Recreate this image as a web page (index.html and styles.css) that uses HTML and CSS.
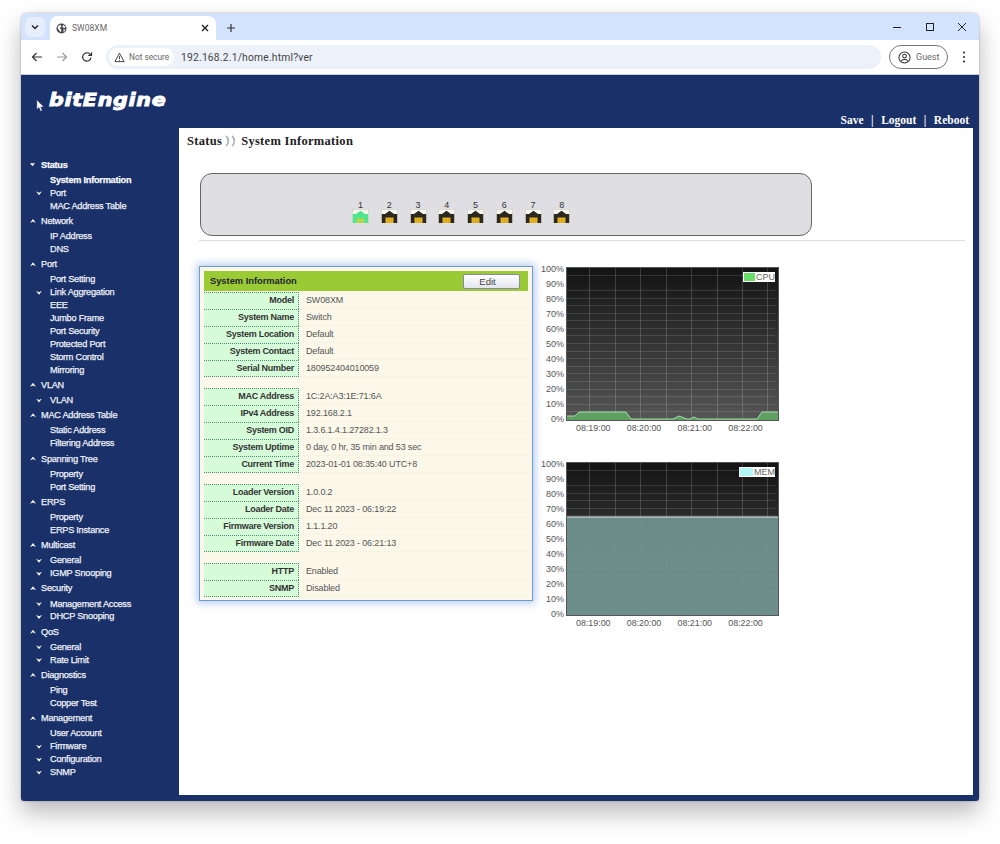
FILE: index.html
```html
<!DOCTYPE html>
<html lang="en">
<head>
<meta charset="utf-8">
<title>SW08XM</title>
<link rel="stylesheet" href="styles.css">
</head>
<body>
<svg class="defs" width="0" height="0" aria-hidden="true">
  <symbol id="port" viewBox="0 0 17 14">
    <rect x=".25" y=".25" width="16.500" height="13.500" fill="#f6f5ee" stroke="#c8c4b0" stroke-width=".5"/>
    <path d="M8.500 1.800 13 5h3.200V14H.8V5H4z" fill="#2c2721"/>
    <rect x="4.500" y="8.500" width="8" height="5.500" fill="#e6b522"/>
    <path d="M6.500 9V14M8.500 9V14M10.500 9V14" stroke="#c9971a" stroke-width=".5"/>
  </symbol>
  <symbol id="port-up" viewBox="0 0 17 14">
    <rect x=".25" y=".25" width="16.500" height="13.500" fill="#f6f5ee" stroke="#c8c4b0" stroke-width=".5"/>
    <path d="M8.500 1.800 13 5h3.200V14H.8V5H4z" fill="#4fe58f"/>
    <rect x="4.500" y="9.500" width="8" height="4.500" fill="#b5d84a"/>
  </symbol>
  <linearGradient id="plotbg" x1="0" y1="0" x2="0" y2="1">
    <stop offset="0" stop-color="#131313"/>
    <stop offset="1" stop-color="#565656"/>
  </linearGradient>
  <symbol id="grid" viewBox="0 0 213 154">
    <path d="M23.500 0V154M49.500 0V154M74.500 0V154M100.500 0V154M125.500 0V154M151.500 0V154M176.500 0V154M201.500 0V154" stroke="#fff" stroke-opacity=".17" fill="none"/>
    <path d="M0 8.500H209M0 23.500H209M0 31.500H209M0 38.500H209M0 46.500H209M0 53.500H209M0 61.500H209M0 68.500H209M0 76.500H209M0 84.500H209M0 91.500H209M0 99.500H209M0 106.500H209M0 114.500H209M0 122.500H209M0 129.500H209M0 137.500H209M0 144.500H209" stroke="#fff" stroke-opacity=".12" fill="none"/>
  </symbol>
</svg>

<div class="window">
  <div class="tabstrip">
    <button class="tablist" aria-label="Search tabs">
      <svg viewBox="0 0 12 12" width="12" height="12"><path d="M3 4.500 6 7.500 9 4.500" fill="none" stroke="#1f1f1f" stroke-width="1.400"/></svg>
    </button>
    <div class="tab">
      <svg class="globe" viewBox="0 0 12 12" width="11" height="11"><circle cx="6" cy="6" r="5.500" fill="#45494e"/><path d="M2 3.500 5 2l1 2-2 1.500 2 2-1 2.500-3-4zM8 1.800l2.500 2.500-2 1.500L7 3.500zM8 7h2.500L8.500 10z" fill="#fff"/></svg>
      <span class="tabtitle">SW08XM</span>
      <svg class="tabclose" viewBox="0 0 10 10" width="10" height="10"><path d="M2 2 8 8M8 2 2 8" stroke="#1f1f1f" stroke-width="1.400"/></svg>
    </div>
    <svg class="newtab" viewBox="0 0 10 10" width="10" height="10"><path d="M5 1V9M1 5H9" stroke="#333" stroke-width="1.200"/></svg>
    <div class="winctl">
      <svg viewBox="0 0 10 10" width="10" height="10"><path d="M1 5.500H9" stroke="#222"/></svg>
      <svg viewBox="0 0 10 10" width="10" height="10"><rect x="1.500" y="1.500" width="7" height="7" fill="none" stroke="#222"/></svg>
      <svg viewBox="0 0 10 10" width="10" height="10"><path d="M1 1 9 9M9 1 1 9" stroke="#222"/></svg>
    </div>
  </div>

  <div class="toolbar">
    <svg class="navicon" viewBox="0 0 12 12" width="12" height="12"><path d="M11 6H1.500M5.500 2 1.500 6l4 4" fill="none" stroke="#333" stroke-width="1.200"/></svg>
    <svg class="navicon" viewBox="0 0 12 12" width="12" height="12"><path d="M1 6H10.500M6.500 2l4 4-4 4" fill="none" stroke="#9a9a9a" stroke-width="1.200"/></svg>
    <svg class="navicon" viewBox="0 0 12 12" width="12" height="12"><path d="M10 6.500A4.200 4.200 0 1 1 8.800 3L10.500 4.500M10.500 1.200V4.500H7.200" fill="none" stroke="#333" stroke-width="1.200"/></svg>
    <div class="omnibox">
      <div class="chip">
        <svg viewBox="0 0 12 12" width="11" height="11"><path d="M6 1.300 11 10.500H1z" fill="none" stroke="#333"/><path d="M6 4.500V7.700M6 8.500V9.500" stroke="#333"/></svg>
        <span>Not secure</span>
      </div>
      <span class="url">192.168.2.1/home.html?ver</span>
    </div>
    <div class="guest">
      <svg viewBox="0 0 14 14" width="13" height="13"><circle cx="7" cy="7" r="6" fill="none" stroke="#333" stroke-width="1.100"/><circle cx="7" cy="5.500" r="2" fill="none" stroke="#333" stroke-width="1.100"/><path d="M3.500 10.500C5 8.800 9 8.800 10.500 10.500" fill="none" stroke="#333" stroke-width="1.100"/></svg>
      <span>Guest</span>
    </div>
    <svg class="kebab" viewBox="0 0 4 14" width="4" height="14"><circle cx="2" cy="2.500" r="1.100" fill="#333"/><circle cx="2" cy="7" r="1.100" fill="#333"/><circle cx="2" cy="11.500" r="1.100" fill="#333"/></svg>
  </div>

  <div class="page">
    <header class="masthead">
      <svg class="cursor" viewBox="0 0 9 13" width="9" height="13"><path d="M.8.8V10.500L3 8.600l1.500 3.600 1.800-.8L4.800 8h3z" fill="#fff" stroke="#1a3068" stroke-width=".5"/></svg>
      <div class="logo">bitEngine</div>
      <nav class="links"><a>Save</a><span>|</span><a>Logout</a><span>|</span><a>Reboot</a></nav>
    </header>

    <div class="main">
      <aside class="sidebar">
        <div class="head open"><i class="caret-down"></i>Status</div>
        <div class="item current"><i></i>System Information</div>
        <div class="item"><i class="chev"></i>Port</div>
        <div class="item"><i></i>MAC Address Table</div>
        <div class="head"><i class="caret-up"></i>Network</div>
        <div class="item"><i></i>IP Address</div>
        <div class="item"><i></i>DNS</div>
        <div class="head"><i class="caret-up"></i>Port</div>
        <div class="item"><i></i>Port Setting</div>
        <div class="item"><i class="chev"></i>Link Aggregation</div>
        <div class="item"><i></i>EEE</div>
        <div class="item"><i></i>Jumbo Frame</div>
        <div class="item"><i></i>Port Security</div>
        <div class="item"><i></i>Protected Port</div>
        <div class="item"><i></i>Storm Control</div>
        <div class="item"><i></i>Mirroring</div>
        <div class="head"><i class="caret-up"></i>VLAN</div>
        <div class="item"><i class="chev"></i>VLAN</div>
        <div class="head"><i class="caret-up"></i>MAC Address Table</div>
        <div class="item"><i></i>Static Address</div>
        <div class="item"><i></i>Filtering Address</div>
        <div class="head"><i class="caret-up"></i>Spanning Tree</div>
        <div class="item"><i></i>Property</div>
        <div class="item"><i></i>Port Setting</div>
        <div class="head"><i class="caret-up"></i>ERPS</div>
        <div class="item"><i></i>Property</div>
        <div class="item"><i></i>ERPS Instance</div>
        <div class="head"><i class="caret-up"></i>Multicast</div>
        <div class="item"><i class="chev"></i>General</div>
        <div class="item"><i class="chev"></i>IGMP Snooping</div>
        <div class="head"><i class="caret-up"></i>Security</div>
        <div class="item"><i class="chev"></i>Management Access</div>
        <div class="item"><i class="chev"></i>DHCP Snooping</div>
        <div class="head"><i class="caret-up"></i>QoS</div>
        <div class="item"><i class="chev"></i>General</div>
        <div class="item"><i class="chev"></i>Rate Limit</div>
        <div class="head"><i class="caret-up"></i>Diagnostics</div>
        <div class="item"><i></i>Ping</div>
        <div class="item"><i></i>Copper Test</div>
        <div class="head"><i class="caret-up"></i>Management</div>
        <div class="item"><i></i>User Account</div>
        <div class="item"><i class="chev"></i>Firmware</div>
        <div class="item"><i class="chev"></i>Configuration</div>
        <div class="item"><i class="chev"></i>SNMP</div>
      </aside>

      <main class="content">
        <h1 class="crumb">
          <span>Status</span>
          <svg viewBox="0 0 13 12" width="13" height="12"><path d="M1 1c3 2 3 8 0 10M7 1c3 2 3 8 0 10" fill="none" stroke="#a9adb8" stroke-width="1.600"/></svg>
          <span>System Information</span>
        </h1>

        <div class="device">
          <div class="portcell"><span>1</span><svg width="17" height="14"><use href="#port-up"/></svg></div>
          <div class="portcell"><span>2</span><svg width="17" height="14"><use href="#port"/></svg></div>
          <div class="portcell"><span>3</span><svg width="17" height="14"><use href="#port"/></svg></div>
          <div class="portcell"><span>4</span><svg width="17" height="14"><use href="#port"/></svg></div>
          <div class="portcell"><span>5</span><svg width="17" height="14"><use href="#port"/></svg></div>
          <div class="portcell"><span>6</span><svg width="17" height="14"><use href="#port"/></svg></div>
          <div class="portcell"><span>7</span><svg width="17" height="14"><use href="#port"/></svg></div>
          <div class="portcell"><span>8</span><svg width="17" height="14"><use href="#port"/></svg></div>
        </div>
        <div class="rule"></div>

        <div class="row">
          <section class="card">
            <div class="cardhead"><span>System Information</span><button class="edit">Edit</button></div>
            <div class="group">
              <div class="kv"><b>Model</b><span>SW08XM</span></div>
              <div class="kv"><b>System Name</b><span>Switch</span></div>
              <div class="kv"><b>System Location</b><span>Default</span></div>
              <div class="kv"><b>System Contact</b><span>Default</span></div>
              <div class="kv"><b>Serial Number</b><span>180952404010059</span></div>
            </div>
            <div class="group">
              <div class="kv"><b>MAC Address</b><span>1C:2A:A3:1E:71:6A</span></div>
              <div class="kv"><b>IPv4 Address</b><span>192.168.2.1</span></div>
              <div class="kv"><b>System OID</b><span>1.3.6.1.4.1.27282.1.3</span></div>
              <div class="kv"><b>System Uptime</b><span>0 day, 0 hr, 35 min and 53 sec</span></div>
              <div class="kv"><b>Current Time</b><span>2023-01-01 08:35:40 UTC+8</span></div>
            </div>
            <div class="group">
              <div class="kv"><b>Loader Version</b><span>1.0.0.2</span></div>
              <div class="kv"><b>Loader Date</b><span>Dec 11 2023 - 06:19:22</span></div>
              <div class="kv"><b>Firmware Version</b><span>1.1.1.20</span></div>
              <div class="kv"><b>Firmware Date</b><span>Dec 11 2023 - 06:21:13</span></div>
            </div>
            <div class="group">
              <div class="kv"><b>HTTP</b><span>Enabled</span></div>
              <div class="kv"><b>SNMP</b><span>Disabled</span></div>
            </div>
          </section>

          <div class="charts">
            <figure class="chart">
              <div class="yaxis"><span>100%</span><span>90%</span><span>80%</span><span>70%</span><span>60%</span><span>50%</span><span>40%</span><span>30%</span><span>20%</span><span>10%</span><span>0%</span></div>
              <div class="plot">
                <svg viewBox="0 0 213 154" width="213" height="154">
                  <rect width="213" height="154" fill="url(#plotbg)"/>
                  <use href="#grid" width="213" height="154"/>
                  <path d="M0 149H9L13 145H60L65 152H107L113 149L121 152H124L128 150L132 152H191L196 145H213V154H0Z" fill="#5e9f62"/>
                  <path d="M0 149H9L13 145H60L65 152H107L113 149L121 152H124L128 150L132 152H191L196 145H213" fill="none" stroke="#a5dba8"/>
                  <rect x=".5" y=".5" width="212" height="153" fill="none" stroke="#555"/>
                </svg>
                <div class="legend"><i class="cpu"></i><span>CPU</span></div>
              </div>
              <div class="xaxis"><span>08:19:00</span><span>08:20:00</span><span>08:21:00</span><span>08:22:00</span></div>
            </figure>
            <figure class="chart">
              <div class="yaxis"><span>100%</span><span>90%</span><span>80%</span><span>70%</span><span>60%</span><span>50%</span><span>40%</span><span>30%</span><span>20%</span><span>10%</span><span>0%</span></div>
              <div class="plot">
                <svg viewBox="0 0 213 154" width="213" height="154">
                  <rect width="213" height="154" fill="url(#plotbg)"/>
                  <use href="#grid" width="213" height="154"/>
                  <rect y="55" width="213" height="99" fill="#6f928f" fill-opacity=".93"/>
                  <path d="M0 55H213" stroke="#e8f4f2" stroke-width="1.200"/>
                  <rect x=".5" y=".5" width="212" height="153" fill="none" stroke="#555"/>
                </svg>
                <div class="legend wide"><i class="mem"></i><span>MEM</span></div>
              </div>
              <div class="xaxis"><span>08:19:00</span><span>08:20:00</span><span>08:21:00</span><span>08:22:00</span></div>
            </figure>
          </div>
        </div>
      </main>
    </div>
  </div>
</div>
</body>
</html>
```
FILE: styles.css
```css
* { box-sizing: border-box; }
html, body { margin: 0; height: 844px; overflow: hidden; background: #fff; }
body { padding: 13px 0 0 21px; font-family: "Liberation Sans", Arial, sans-serif; }
.defs { position: absolute; }

.window {
  width: 958px; height: 788px; display: flex; flex-direction: column;
  border-radius: 6px 6px 3px 3px; overflow: hidden;
  box-shadow: 0 0 2px rgba(0,0,0,.35), 0 12px 24px rgba(0,0,0,.27);
}

/* browser chrome */
.tabstrip { height: 27px; background: #d3e3fd; display: flex; align-items: flex-end; padding-left: 4px; flex: none; }
.tablist { width: 20px; height: 20px; margin-bottom: 3px; border: 0; padding: 0; border-radius: 6px; background: #e6eefb; display: flex; align-items: center; justify-content: center; }
.tab { width: 166px; height: 24px; margin-left: 5px; background: #fff; border-radius: 8px 8px 0 0; display: flex; align-items: center; padding: 0 6px 0 6px; }
.globe { flex: none; }
.tabtitle { margin-left: 5px; font: 8.500px "Roboto", sans-serif; color: #666; flex: 1; letter-spacing: .05px; }
.newtab { margin: 0 0 7px 10px; }
.winctl { margin-left: auto; width: 87px; display: flex; justify-content: space-between; padding: 0 12px 0 0; margin-bottom: 8px; }

.toolbar { height: 35px; flex: none; background: #fff; display: flex; align-items: center; padding-left: 10px; border-bottom: 1px solid #c9d3e0; }
.navicon { margin-right: 13px; flex: none; }
.omnibox { width: 775px; height: 24px; background: #edf2fa; border-radius: 12px; display: flex; align-items: center; padding-left: 3px; }
.chip { height: 18px; width: 65px; background: #fff; border-radius: 9px; display: flex; align-items: center; gap: 4px; padding-left: 5px; font: 8.300px "Roboto", sans-serif; color: #666; }
.url { margin-left: 7px; font: 10.300px "Roboto", sans-serif; color: #444; letter-spacing: .2px; }
.guest { width: 59px; height: 24px; margin-left: 8px; border: 1px solid #777; border-radius: 12px; display: flex; align-items: center; gap: 5px; padding-left: 8px; font: 9px "Roboto", sans-serif; color: #666; }
.kebab { margin-left: 14px; }

/* page */
.page { flex: 1; background: #1a3068; display: flex; flex-direction: column; min-height: 0; }
.masthead { height: 53px; flex: none; display: flex; align-items: flex-end; position: relative; padding: 0 10px 2px 15px; }
.cursor { position: absolute; left: 15px; top: 24px; }
.logo { position: absolute; left: 28px; top: 15px; font: italic 700 17.500px "DejaVu Sans", sans-serif; color: #fff; letter-spacing: .6px; -webkit-text-stroke: .9px #fff; transform: scaleX(1.18); transform-origin: left center; }
.links { margin-left: auto; display: flex; gap: 7.500px; font: 700 11.500px "Liberation Serif", serif; color: #fff; }

.main { flex: 1; display: flex; min-height: 0; }
.sidebar { width: 158px; flex: none; padding-top: 28.500px; color: #eef1f8; font-size: 9.200px; letter-spacing: -.25px; }
.head { height: 17.500px; padding: 0 0 1px 9px; display: flex; align-items: center; -webkit-text-stroke: .25px #eef1f8; }
.head i { width: 11px; flex: none; }
.head.open { font-weight: 700; color: #fff; }
.item { height: 12.900px; line-height: 12.900px; display: flex; align-items: center; padding-left: 15px; -webkit-text-stroke: .25px #eef1f8; }
.item i { width: 14px; flex: none; }
.item.current { font-weight: 700; color: #fff; }
.caret-down::before, .caret-up::before, .chev::before { content: ""; display: block; background: #fff; }
.caret-down::before { width: 5px; height: 3px; clip-path: polygon(0 0,100% 0,50% 100%); }
.caret-up::before { width: 6px; height: 4px; clip-path: polygon(50% 0,100% 100%,50% 65%,0 100%); }
.chev::before { width: 6px; height: 4px; clip-path: polygon(0 0,50% 35%,100% 0,50% 100%); }

.content { flex: 1; background: #fff; margin: 0 6px 6px 0; padding-top: 5px; min-width: 0; }
.crumb { margin: 0 0 0 8px; height: 16px; display: flex; align-items: center; gap: 2px; font: 700 12.500px/16px "Liberation Serif", serif; color: #222; letter-spacing: .3px; }
.crumb svg { margin: 0 1px 0 1px; }
.device { width: 612px; height: 63px; margin: 24px 0 0 21px; background: #dfdee2; border: 1px solid #666; border-radius: 12px; display: flex; gap: 11.750px; padding: 26px 0 0 151px; }
.portcell { width: 17px; display: flex; flex-direction: column; align-items: center; font-size: 9px; line-height: 10px; color: #333; }
.portcell span { margin-bottom: -1px; }
.portcell svg { display: block; }
.rule { width: 766px; height: 1px; margin: 4px 0 0 20px; background: #dcdcdc; }

.row { display: flex; margin: 25px 0 0 20px; gap: 8px; align-items: flex-start; }
.card { width: 334px; height: 335px; padding: 4px; background: #fbf8ea; border: 1px solid #6f9ad0; box-shadow: 0 0 8px 2px rgba(100,150,220,.5); font-size: 9px; }
.cardhead { height: 20px; background: #9acb34; display: flex; align-items: center; justify-content: space-between; padding: 0 8px 0 6px; margin-bottom: 1px; font-weight: 700; color: #223; font-size: 9.300px; }
.edit { width: 57px; height: 15px; padding: 0 8px 0 0; border: 1px solid #8a8aa8; border-radius: 2px; background: linear-gradient(#fff,#e4e4ee); font: 9.500px "Liberation Sans", sans-serif; color: #444; }
.group { margin-bottom: 11px; }
.kv { height: 17px; display: flex; align-items: center; border-bottom: 1px solid #f6f3e3; }
.kv b { width: 95px; height: 17px; line-height: 14px; flex: none; text-align: right; padding-right: 4px; background: #d6fbd9; border-top: 1px dotted #4f8f78; border-right: 1px dotted #4f8f78; color: #333; letter-spacing: -.27px; }
.group .kv:last-child b { border-bottom: 1px dotted #4f8f78; }
.kv span { padding-left: 7px; color: #555; letter-spacing: -.15px; }

.charts { display: flex; flex-direction: column; margin-top: 1px; }
.chart { margin: 0; height: 195px; display: grid; grid-template-columns: 22px 213px; column-gap: 3px; grid-template-rows: 154px auto; }
.yaxis { display: grid; grid-auto-rows: 15px; margin-top: -5px; font-size: 9px; line-height: 15px; color: #555; text-align: right; }
.plot { position: relative; height: 154px; }
.plot svg { display: block; }
.legend { position: absolute; right: 4px; top: 5px; height: 10px; display: flex; align-items: center; background: #fff; padding: 0 0 0 1px; font-size: 9px; color: #666; }
.legend i { width: 11px; height: 8px; margin-right: 1px; }
.legend i.cpu { background: #66dd66; }
.legend i.mem { width: 13px; background: #b5f5f5; }
.xaxis { grid-column: 2; display: flex; height: 14px; padding-left: 10px; font-size: 8.900px; line-height: 14px; color: #555; }
.xaxis span { width: 51px; }
```
